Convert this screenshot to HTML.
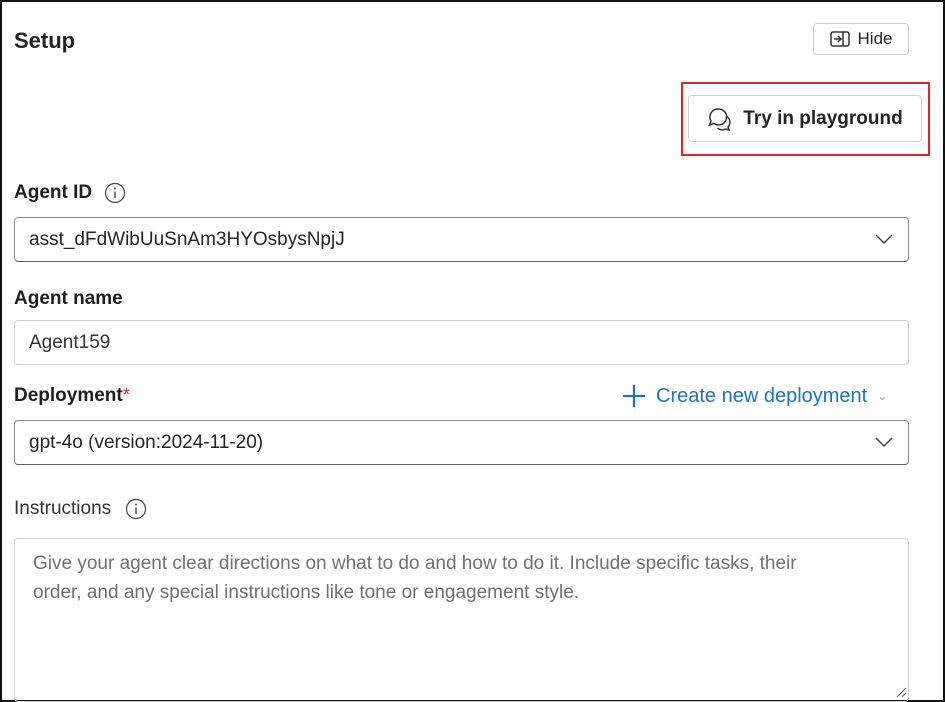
<!DOCTYPE html>
<html><head><style>
body{margin:0;width:945px;height:702px;overflow:hidden;background:#fff;font-family:"Liberation Sans",sans-serif;color:#242424}
.frame{position:absolute;left:0;top:0;width:941px;height:698px;border:2px solid #111}
.a{position:absolute}
.lbl{font-size:19px;font-weight:bold;color:#1f1f1f}
.box{position:absolute;left:14px;width:895px;border:1px solid #d1d1d1;border-radius:4px;box-sizing:border-box;font-size:19px;padding-left:14px;display:flex;align-items:center}
.dd{border-color:#8a8a8a;border-bottom:1px solid #616161}
.chev{position:absolute;right:14px;top:14px}
</style></head><body>
<div class="frame"></div>
<div class="a" style="left:14px;top:28px;font-size:22px;font-weight:bold">Setup</div>
<div class="a" style="left:813px;top:23px;width:96px;height:32px;border:1px solid #d1d1d1;border-radius:4px;box-sizing:border-box;font-size:17px;display:flex;align-items:center;justify-content:center;gap:8px">
<svg width="20" height="16" viewBox="0 0 20 16"><rect x="1" y="1" width="18" height="14" rx="2" fill="none" stroke="#333" stroke-width="1.5"/><line x1="13" y1="1" x2="13" y2="15" stroke="#333" stroke-width="1.5"/><path d="M4 8h6M8 5l3 3-3 3" fill="none" stroke="#333" stroke-width="1.5"/></svg>Hide</div>
<div class="a" style="left:681px;top:82px;width:249px;height:74px;border:2px solid #e8202a;box-sizing:border-box"></div>
<div class="a" style="left:688px;top:95px;width:234px;height:47px;border:1px solid #d1d1d1;border-radius:4px;box-sizing:border-box;font-size:19px;font-weight:bold;display:flex;align-items:center;justify-content:center;gap:10px">
<svg width="26" height="24" viewBox="0 0 26 24"><path d="M11 2a8 8 0 0 0-7 12l-1.5 4 4.5-1.5A8 8 0 1 0 11 2z" fill="none" stroke="#333" stroke-width="1.5"/><path d="M19 9a7 7 0 0 1 2 11l1 3-3.5-1a7 7 0 0 1-8-1" fill="none" stroke="#333" stroke-width="1.5"/></svg>Try in playground</div>
<div class="a lbl" style="left:14px;top:182px">Agent ID</div>
<svg class="a" style="left:104px;top:182px" width="22" height="22" viewBox="0 0 22 22"><circle cx="11" cy="11" r="9.5" fill="none" stroke="#444" stroke-width="1.2"/><circle cx="11" cy="6.5" r="1" fill="#444"/><line x1="11" y1="9.5" x2="11" y2="16" stroke="#444" stroke-width="1.4"/></svg>
<div class="box dd" style="top:217px;height:45px">asst_dFdWibUuSnAm3HYOsbysNpjJ<svg class="chev" width="20" height="14" viewBox="0 0 20 14"><path d="M2 3l8 8 8-8" fill="none" stroke="#444" stroke-width="1.5"/></svg></div>
<div class="a lbl" style="left:14px;top:288px">Agent name</div>
<div class="box" style="top:320px;height:45px;color:#333">Agent159</div>
<div class="a lbl" style="left:14px;top:385px">Deployment<span style="color:#c4314b;font-weight:normal">*</span></div>
<div class="a" style="left:622px;top:384px;font-size:20px;color:#1b73c5;display:flex;align-items:center;gap:10px"><svg width="24" height="24" viewBox="0 0 24 24"><path d="M12 1v22M1 12h22" stroke="#1b73c5" stroke-width="2.2"/></svg>Create new deployment <span style="font-size:12px;color:#8aa">&#8964;</span></div>
<div class="box dd" style="top:420px;height:45px">gpt-4o (version:2024-11-20)<svg class="chev" width="20" height="14" viewBox="0 0 20 14"><path d="M2 3l8 8 8-8" fill="none" stroke="#444" stroke-width="1.5"/></svg></div>
<div class="a" style="left:14px;top:498px;font-size:19px;color:#333">Instructions</div>
<svg class="a" style="left:125px;top:498px" width="22" height="22" viewBox="0 0 22 22"><circle cx="11" cy="11" r="9.5" fill="none" stroke="#444" stroke-width="1.2"/><circle cx="11" cy="6.5" r="1" fill="#444"/><line x1="11" y1="9.5" x2="11" y2="16" stroke="#444" stroke-width="1.4"/></svg>
<div class="a" style="left:14px;top:538px;width:895px;height:164px;border:1px solid #d1d1d1;border-radius:4px;box-sizing:border-box;padding:10px 60px 10px 18px;font-size:19px;line-height:29px;color:#707070">Give your agent clear directions on what to do and how to do it. Include specific tasks, their order, and any special instructions like tone or engagement style.</div>
<svg class="a" style="left:895px;top:686px" width="12" height="12" viewBox="0 0 12 12"><path d="M2 11L11 2M7 11l4-4" stroke="#666" stroke-width="1.2"/></svg>
</body></html>
